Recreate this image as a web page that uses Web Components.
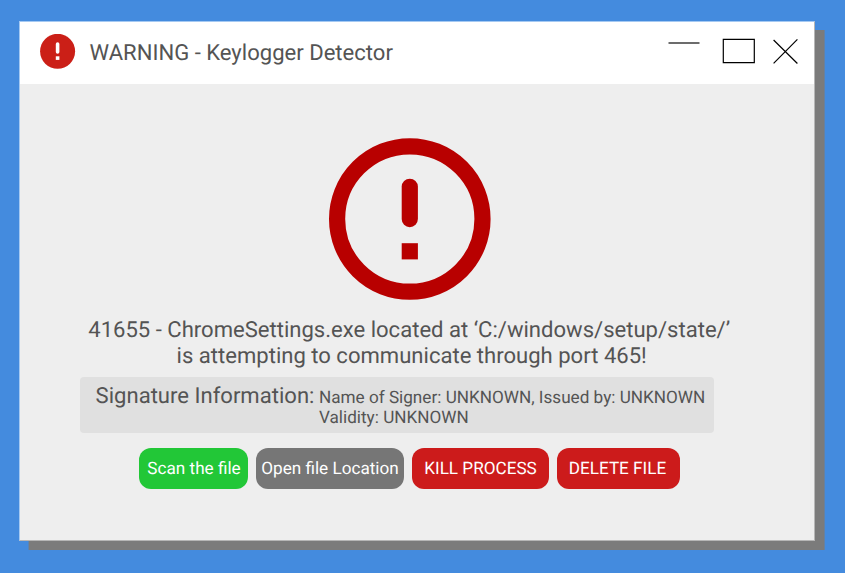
<!DOCTYPE html>
<html lang="en"><head><meta charset="utf-8"><title>Keylogger Detector</title>
<style>
html,body{margin:0;height:100%;overflow:hidden;background:#448bde}
body{box-sizing:border-box;padding:21px 0 0 19px;font-family:Roboto,"Liberation Sans",sans-serif;color:#545454;text-rendering:geometricPrecision}
</style></head><body>
<app-window><title-bar slot="bar">WARNING - Keylogger Detector</title-bar>
<alert-icon></alert-icon>
<alert-message><span slot="a">41655 - ChromeSettings.exe located at ‘C:/windows/setup/state/’</span><span slot="b">is attempting to communicate through port 465!</span></alert-message>
<signature-box><span slot="label">Signature Information:</span><span slot="a">Name of Signer: UNKNOWN, Issued by: UNKNOWN</span><span slot="b">Validity: UNKNOWN</span></signature-box>
<action-row>
<action-button style="--w:109px;--bg:#22c737;--pl:1px">Scan the file</action-button>
<action-button style="--w:148px;--bg:#767676">Open file Location</action-button>
<action-button style="--w:137px;--bg:#cc1b1b">KILL PROCESS</action-button>
<action-button style="--w:123px;--bg:#cc1b1b;--pr:2px">DELETE FILE</action-button>
</action-row></app-window>
<script>
const define=(name,html)=>customElements.define(name,class extends HTMLElement{
  constructor(){super();this.attachShadow({mode:'open'}).innerHTML=html;}
});
define('app-window',`<style>:host{display:flex;flex-direction:column;width:794px;height:518px;background:#eee;border:1px solid;border-color:#a5c9f2 #b6b6b6 #b6b6b6 #a5c9f2;box-shadow:9.6px 9px 0 #7b7b7b}</style><slot name="bar"></slot><slot></slot>`);
define('title-bar',`<style>:host{display:flex;align-items:center;box-sizing:border-box;height:62px;background:#fff;padding:0 0 2px 20px;font-size:22.07px;white-space:nowrap}
.badge{margin-right:13.6px;display:block}.t{flex:1;padding-top:3px}.ctl{display:block}</style>
<svg class="badge" width="36" height="36" viewBox="0 0 36 36"><circle cx="17.6" cy="17.3" r="17.5" fill="#cb1f17"/><rect x="15.8" y="8.3" width="3.6" height="11.5" rx="1.8" fill="#fff"/><rect x="15.8" y="22.3" width="3.6" height="3.6" fill="#fff"/></svg>
<span class="t"><slot></slot></span>
<svg class="ctl" width="146" height="60" viewBox="668 22 146 60" fill="none" stroke="#000" stroke-width="1.2"><path stroke="#5c5c5c" stroke-width="1.8" d="M668.5 43h31"/><path d="M723.3 39.4h31v23.2h-31zM773.6 40l23.8 23.5M797.4 39.3l-23.8 24"/></svg>`);
define('alert-icon',`<style>:host{display:block;padding:54px 0 0 309px}svg{display:block}</style>
<svg width="162" height="162" viewBox="0 0 162 162" fill="#b80000"><circle cx="80.8" cy="81" r="72.7" fill="none" stroke="#b80000" stroke-width="16.2"/><rect x="72.7" y="40.7" width="16.2" height="48.5" rx="8.1"/><rect x="72.7" y="105.2" width="16.2" height="16.2"/></svg>`);
define('alert-message',`<style>:host{display:flex;flex-direction:column;align-items:center;width:778.4px;height:52px;padding-top:18px;margin-bottom:-2px;font-size:22.07px;line-height:26px;white-space:nowrap}.b{padding-left:5px}</style><div><slot name="a"></slot></div><div class="b"><slot name="b"></slot></div>`);
define('signature-box',`<style>:host{display:flex;box-sizing:border-box;width:634px;height:56px;margin:9px 0 0 60px;padding:7px 0 0 15.6px;background:#e0e0e0;border-radius:4px;white-space:nowrap}
.l{font-size:22.07px;line-height:26px;width:223.4px}.r{font-size:17.15px;line-height:20px;padding-top:4px}</style><div class="l"><slot name="label"></slot></div><div class="r"><div><slot name="a"></slot></div><div><slot name="b"></slot></div></div>`);
define('action-row',`<style>:host{display:flex;gap:8px;padding:15px 0 0 119px}</style><slot></slot>`);
define('action-button',`<style>:host{display:flex;align-items:center;justify-content:center;box-sizing:border-box;width:var(--w);height:41px;padding:1px var(--pr,0) 0 var(--pl,0);border-radius:12px;background:var(--bg);color:#fff;font-size:17.15px;white-space:nowrap}</style><slot></slot>`);
</script></body></html>
